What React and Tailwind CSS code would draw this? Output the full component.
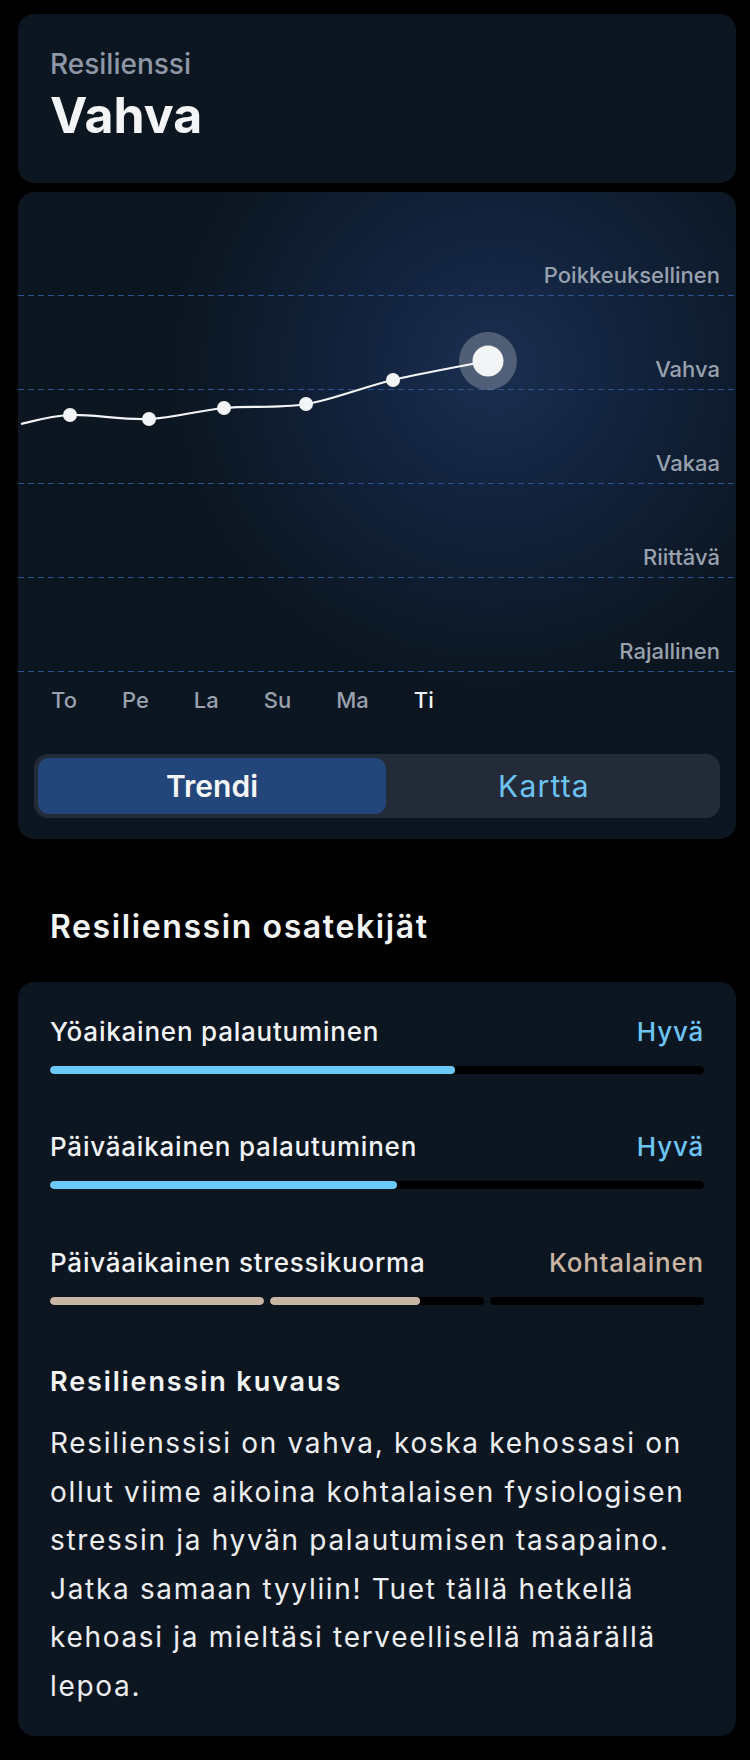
import React from 'react';

const LEVELS = ['Poikkeuksellinen', 'Vahva', 'Vakaa', 'Riittävä', 'Rajallinen'];
const DAYS = ['To', 'Pe', 'La', 'Su', 'Ma', 'Ti'];

// chart points, relative to the chart card
const POINTS = [
  [3, 232],
  [52, 223],
  [131, 227],
  [206, 216],
  [288, 212],
  [375, 188],
  [470, 169],
];

const smoothPath = (pts) => {
  let d = `M${pts[0][0]},${pts[0][1]}`;
  for (let i = 0; i < pts.length - 1; i++) {
    const p0 = pts[i - 1] || pts[i];
    const p1 = pts[i];
    const p2 = pts[i + 1];
    const p3 = pts[i + 2] || p2;
    const c1x = p1[0] + (p2[0] - p0[0]) / 6;
    const c1y = p1[1] + (p2[1] - p0[1]) / 6;
    const c2x = p2[0] - (p3[0] - p1[0]) / 6;
    const c2y = p2[1] - (p3[1] - p1[1]) / 6;
    d += ` C${c1x},${c1y} ${c2x},${c2y} ${p2[0]},${p2[1]}`;
  }
  return d;
};

const Bar = ({ value, color }) => (
  <div className="h-[8px] w-full rounded-full bg-black overflow-hidden">
    <div className={`h-full rounded-full ${color}`} style={{ width: `${value}%` }} />
  </div>
);

const Factor = ({ label, rating, ratingColor, children, className = '' }) => (
  <div className={className}>
    <div className="flex items-center justify-between text-[26px] leading-[32px] font-medium tracking-[0.03em]">
      <span className="text-[#f2f4f7]">{label}</span>
      <span className={ratingColor}>{rating}</span>
    </div>
    <div className="mt-[18px]">{children}</div>
  </div>
);

export default function App() {
  const last = POINTS[POINTS.length - 1];

  return (
    <div
      className="min-h-[1760px] bg-black pl-[18px] pr-[14px] pt-[14px] pb-[23px]"
      style={{ fontFamily: 'Inter, "Noto Sans", sans-serif' }}
    >
      {/* headline card */}
      <div className="h-[169px] rounded-[16px] bg-[#0c1621] px-[32px] pt-[33px]">
        <div className="text-[28px] leading-[34px] font-medium text-[#8e97a6]">Resilienssi</div>
        <div className="mt-[6px] text-[50px] leading-[56px] font-bold text-[#f3f4f6]">Vahva</div>
      </div>

      {/* trend card */}
      <div className="relative mt-[9px] overflow-hidden rounded-[16px] bg-[#0c1621] bg-[radial-gradient(circle_at_476px_175px,#1b2f50_0px,#132440_120px,#0c1621_320px)] pt-[10px] pb-[21px]">
        <div>
          {LEVELS.map((lvl) => (
            <div key={lvl} className="flex h-[94px] flex-col justify-end">
              <div className="pb-[7px] pr-[16px] text-right text-[22px] leading-[26px] font-medium text-[#98a1ae]">
                {lvl}
              </div>
              <div className="h-px w-full bg-[repeating-linear-gradient(90deg,#2a5592_0px,#2a5592_6px,transparent_6px,transparent_10px)]" />
            </div>
          ))}
        </div>

        <svg className="absolute left-0 top-0" width="718" height="647" viewBox="0 0 718 647">
          <path d={smoothPath(POINTS)} fill="none" stroke="#f3f4f6" strokeWidth="2.2" />
          {POINTS.slice(1, -1).map(([x, y]) => (
            <circle key={x} cx={x} cy={y} r="7" fill="#f3f4f6" />
          ))}
          <circle cx={last[0]} cy={last[1]} r="29" fill="#ffffff" fillOpacity="0.24" />
          <circle cx={last[0]} cy={last[1]} r="15.5" fill="#f3f4f6" />
        </svg>

        <div className="mt-[15px] flex gap-[45px] pl-[33px] text-[22px] leading-[26px] font-medium">
          {DAYS.map((d, i) => (
            <span key={d} className={i === DAYS.length - 1 ? 'text-[#f3f4f6]' : 'text-[#98a1ae]'}>
              {d}
            </span>
          ))}
        </div>

        <div className="mx-[16px] mt-[41px] flex h-[64px] rounded-[14px] bg-[#242b38] p-[4px]">
          <div className="flex w-[348px] items-center justify-center rounded-[11px] bg-[#23467a] text-[30px] font-semibold text-[#f5f6f8]">
            Trendi
          </div>
          <div className="flex flex-1 items-center justify-center pr-[14px] text-[30px] tracking-[0.04em] text-[#6cc4f5]">
            Kartta
          </div>
        </div>
      </div>

      <h2 className="mt-[68px] pl-[32px] text-[32px] leading-[40px] font-semibold tracking-[0.05em] text-[#f3f4f6]">
        Resilienssin osatekijät
      </h2>

      {/* factors card */}
      <div className="mt-[35px] rounded-[16px] bg-[#0c1621] px-[32px] pt-[34px] pb-[26px]">
        <Factor label="Yöaikainen palautuminen" rating="Hyvä" ratingColor="text-[#6cc4f5]">
          <Bar value={62} color="bg-[#6cc8fa]" />
        </Factor>
        <Factor
          className="mt-[57px]"
          label="Päiväaikainen palautuminen"
          rating="Hyvä"
          ratingColor="text-[#6cc4f5]"
        >
          <Bar value={53} color="bg-[#6cc8fa]" />
        </Factor>
        <Factor
          className="mt-[58px]"
          label="Päiväaikainen stressikuorma"
          rating="Kohtalainen"
          ratingColor="text-[#c9b5a3]"
        >
          <div className="flex gap-[6px]">
            <div className="flex-1">
              <Bar value={100} color="bg-[#c9b5a3]" />
            </div>
            <div className="flex-1">
              <Bar value={70} color="bg-[#c9b5a3]" />
            </div>
            <div className="flex-1">
              <Bar value={0} color="bg-[#c9b5a3]" />
            </div>
          </div>
        </Factor>

        <h3 className="mt-[60px] text-[27px] leading-[34px] font-semibold tracking-[0.07em] text-[#f3f4f6]">
          Resilienssin kuvaus
        </h3>
        <p className="mt-[20px] whitespace-nowrap text-[28px] leading-[48.5px] tracking-[0.06em] text-[#eceef1]">
          Resilienssisi on vahva, koska kehossasi on
          <br />
          ollut viime aikoina kohtalaisen fysiologisen
          <br />
          stressin ja hyvän palautumisen tasapaino.
          <br />
          Jatka samaan tyyliin! Tuet tällä hetkellä
          <br />
          kehoasi ja mieltäsi terveellisellä määrällä
          <br />
          lepoa.
        </p>
      </div>
    </div>
  );
}
